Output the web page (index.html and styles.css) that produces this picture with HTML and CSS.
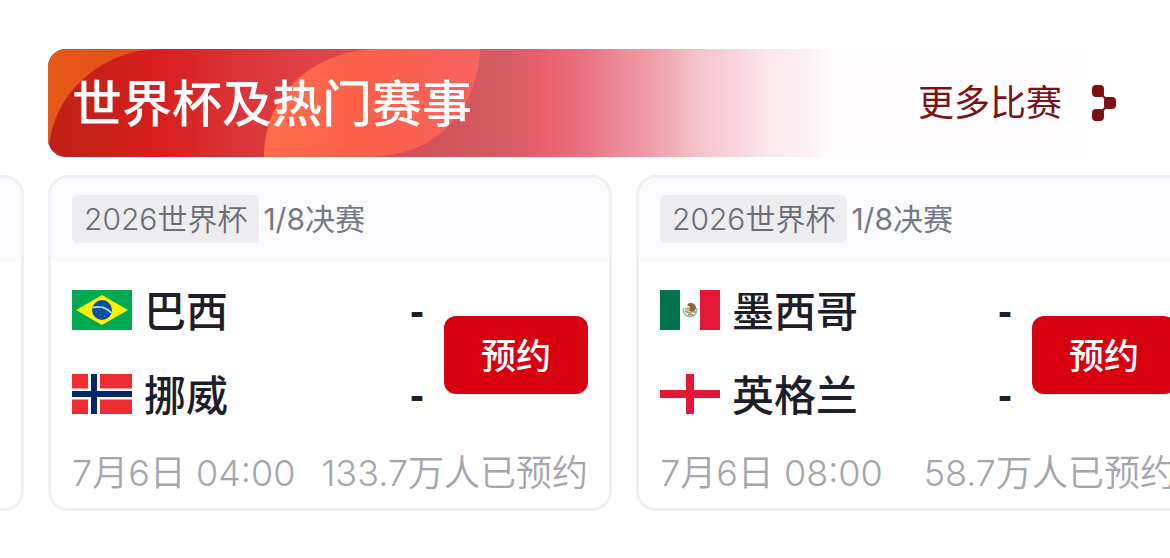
FILE: index.html
```html
<!DOCTYPE html>
<html lang="zh-CN">
<head>
<meta charset="utf-8">
<meta name="viewport" content="width=device-width, initial-scale=1">
<title>世界杯及热门赛事</title>
<link rel="stylesheet" href="styles.css">
</head>
<body>
<main class="page">
  <header class="banner">
    <svg class="banner-art" width="450" height="108" viewBox="0 0 450 108" aria-hidden="true">
      <defs>
        <linearGradient id="corner" x1="0" y1="0" x2="1" y2="0">
          <stop offset="0" stop-color="#e65a18"/>
          <stop offset="1" stop-color="#e34c18"/>
        </linearGradient>
        <linearGradient id="petal" x1="0" y1="0" x2="1" y2="0">
          <stop offset="0" stop-color="#ff6e4b"/>
          <stop offset=".45" stop-color="#fb6049"/>
          <stop offset="1" stop-color="#f8625f"/>
        </linearGradient>
      </defs>
      <path fill="url(#corner)" d="M0 0H108C52 3 5 44 1 100L0 108Z"/>
      <path fill="url(#petal)" d="M216 108C216 48 262 3 326 0H432C429 58 394 103 328 108Z"/>
    </svg>
    <h1 class="banner-title">世界杯及热门赛事</h1>
    <a class="more" href="#matches">更多比赛
      <svg class="more-icon" width="24" height="36" viewBox="0 0 24 36" aria-hidden="true">
        <g fill="#7b1113">
          <rect width="12" height="12" rx="4"/>
          <rect x="12" y="12" width="12" height="12" rx="4"/>
          <rect y="24" width="12" height="12" rx="4"/>
          <path d="M9 11.500 11.500 9Q12 12 15 12.500L12.500 15Q12 12 9 11.500ZM9 24.500 11.500 27Q12 24 15 23.500L12.500 21Q12 24 9 24.500Z"/>
        </g>
      </svg>
    </a>
  </header>

  <section class="cards" id="matches">
    <div class="card card-previous" aria-hidden="true"><div class="card-head"></div></div>

    <article class="card">
      <div class="card-head"><span class="tag">2026世界杯</span><span class="stage">1/8决赛</span></div>
      <div class="card-body">
        <div class="teams">
          <div class="team">
            <svg class="flag" viewBox="0 0 60 40" aria-hidden="true">
              <path fill="#00a850" d="M0 0H60V40H0Z"/>
              <path fill="#fff200" d="M4 20 30 5 56 20 30 35Z"/>
              <circle cx="30" cy="20" r="10" fill="#0b4ea2"/>
              <path d="M20.500 17.500Q32 15 39.500 23" fill="none" stroke="#b9dfd8" stroke-width="1.800"/>
              <path d="M24 22h1M28 25h1M32 26h1M34 22h1M27 20h1M31 16h1" stroke="#9cc4dc" stroke-width=".6"/>
            </svg>
            <span class="name">巴西</span><span class="score">-</span>
          </div>
          <div class="team">
            <svg class="flag" viewBox="0 0 60 40" aria-hidden="true">
              <path fill="#ef2b33" d="M0 0H60V40H0Z"/>
              <path fill="#fff" d="M16 0H28V40H16ZM0 14.500H60V25.500H0Z"/>
              <path fill="#002868" d="M19 0H25V40H19ZM0 17H60V23H0Z"/>
            </svg>
            <span class="name">挪威</span><span class="score">-</span>
          </div>
        </div>
        <button class="book" type="button">预约</button>
      </div>
      <div class="card-foot"><time datetime="07-06T04:00">7月6日 04:00</time><span>133.7万人已预约</span></div>
    </article>

    <article class="card">
      <div class="card-head"><span class="tag">2026世界杯</span><span class="stage">1/8决赛</span></div>
      <div class="card-body">
        <div class="teams">
          <div class="team">
            <svg class="flag" viewBox="0 0 60 40" aria-hidden="true">
              <path fill="#fff" d="M0 0H60V40H0Z"/>
              <path fill="#00734a" d="M0 0H20V40H0Z"/>
              <path fill="#e51837" d="M40 0H60V40H40Z"/>
              <path d="M23 18Q23 26 30 26.500Q37 26 37 18" fill="none" stroke="#9fb8a3" stroke-width="1.500"/>
              <path fill="#8f673f" d="M27 15Q29 12 32 13Q36 14 36 18Q35 22 31 22L28 20 30 17Z"/>
              <path fill="#c4b48e" d="M24 19L28 17 30 20 28 22Z"/>
              <path d="M25 21l3 2M28 24.500h5M33 22l3 0" stroke="#5c9b86" stroke-width="1.500"/>
              <path d="M27 22l3 1 2-1" fill="none" stroke="#d98a4a" stroke-width="1.500"/>
            </svg>
            <span class="name">墨西哥</span><span class="score">-</span>
          </div>
          <div class="team">
            <svg class="flag" viewBox="0 0 60 40" aria-hidden="true">
              <path fill="#fff" d="M0 0H60V40H0Z"/>
              <path fill="#e51837" d="M26 0H34V40H26ZM0 16H60V24H0Z"/>
            </svg>
            <span class="name">英格兰</span><span class="score">-</span>
          </div>
        </div>
        <button class="book" type="button">预约</button>
      </div>
      <div class="card-foot"><time datetime="07-06T08:00">7月6日 08:00</time><span>58.7万人已预约</span></div>
    </article>
  </section>
</main>
</body>
</html>
```
FILE: styles.css
```css
* {
  box-sizing: border-box;
}

body {
  margin: 0;
  background: #fff;
  color: #1e1e2a;
  font-family: Inter, "Noto Sans CJK SC", sans-serif;
  overflow-x: hidden;
}

.page {
  padding: 49px 0 47px;
  overflow: hidden;
}

.banner {
  position: relative;
  display: flex;
  align-items: center;
  justify-content: space-between;
  height: 108px;
  margin: 0 48px;
  padding: 0 6px 0 24px;
  border-radius: 18px;
  overflow: hidden;
  background: linear-gradient(90deg,
    #bd2118 0, #c8201a 50px, #d81e1e 110px, #da2c2e 160px, #de4247 260px,
    #d2555c 400px, #d65d65 460px, #e8606c 495px, #ea7582 540px, #ec8d9a 575px,
    #f0aab4 620px, #f5c4cd 650px, #f8d5e0 690px, #f9e8ec 720px, #fbf1f4 760px,
    #fffdfe 785px, #fffdfe 1030px, #fff 1040px);
}

.banner-art {
  position: absolute;
  top: 0;
  left: 0;
}

.banner-title {
  position: relative;
  margin: 0;
  padding-top: 2px;
  color: #fff;
  font-size: 50px;
  font-weight: 500;
  line-height: 72px;
}

.more {
  display: flex;
  align-items: center;
  gap: 30px;
  color: #7b1113;
  font-size: 36px;
  line-height: 48px;
  text-decoration: none;
}

.cards {
  display: flex;
  gap: 24px;
  margin-top: 18px;
}

.card {
  flex: 0 0 564px;
  border: 3px solid #f0f0f2;
  border-radius: 20px;
  overflow: hidden;
  background: #fff;
}

.card-previous {
  flex-basis: 48px;
  margin-left: -24px;
}

.card-head {
  display: flex;
  align-items: center;
  gap: 4px;
  height: 84px;
  padding: 0 21px 2px;
  background: #fafafc;
  font-size: 30px;
  line-height: 48px;
}

.tag {
  padding: 0 12px;
  border-radius: 6px;
  background: #ededef;
  color: #6c6c75;
  font-weight: 350;
}

.stage {
  color: #777985;
  font-weight: 400;
}

.card-body {
  display: flex;
  align-items: center;
  gap: 20px;
  padding: 20px 21px 0;
}

.teams {
  display: grid;
  flex: 1;
  gap: 24px;
}

.team {
  display: flex;
  align-items: center;
  gap: 12px;
  font-size: 42px;
  font-weight: 500;
  line-height: 60px;
}

.flag {
  width: 60px;
  height: 40px;
  margin-bottom: 4px;
}

.name {
  flex: 1;
}

.score {
  font-family: "Liberation Sans", sans-serif;
  font-weight: 700;
}

.book {
  width: 144px;
  height: 78px;
  margin-top: 2px;
  padding: 2px 0 0;
  border: 0;
  border-radius: 12px;
  background: #d7000f;
  color: #fff;
  font: 500 35px/48px Inter, "Noto Sans CJK SC", sans-serif;
}

.card-foot {
  display: flex;
  justify-content: space-between;
  padding: 23px 21px 11px;
  color: #a5a5ab;
  font-size: 36px;
  font-weight: 350;
  line-height: 48px;
  white-space: nowrap;
}
```
